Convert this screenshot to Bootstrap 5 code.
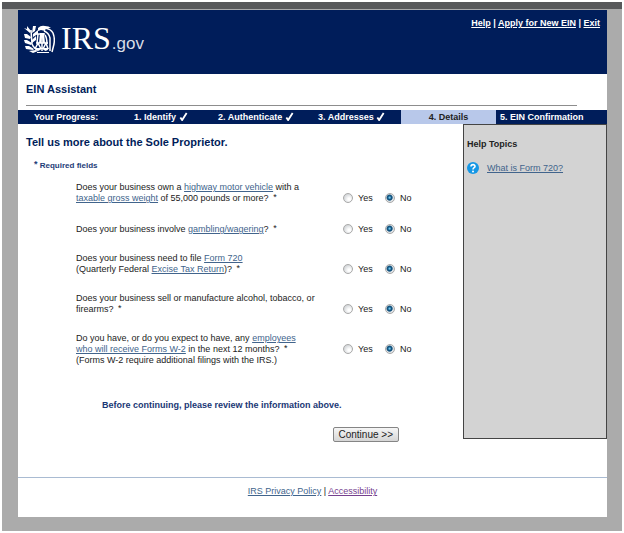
<!DOCTYPE html>
<html lang="en">
<head>
<meta charset="utf-8">
<meta name="viewport" content="width=device-width, initial-scale=1">
<title>EIN Assistant</title>
<link href="https://cdn.jsdelivr.net/npm/bootstrap@5.3.0/dist/css/bootstrap.min.css" rel="stylesheet">
<style>
  body { font-family: "Liberation Sans", Arial, sans-serif; font-size: 9px; line-height: 11px; color: #222; background: #fff; padding: 2px; }
  a { color: #41648c; }
  .frame { background: #ababab; border-top: 7px solid #58595b; padding: 1px 15px 14px 16px; min-height: calc(100vh - 4px); }
  .masthead { background: #001d5a; color: #fff; height: 64px; padding: 8px 7px 0 6px; }
  .masthead a { color: #fff; }
  .wordmark { margin: 2px 0 0 6px; }
  .irs { font-family: "Liberation Serif", "Times New Roman", serif; font-size: 32px; line-height: 36px; }
  .gov { font-size: 17px; color: #d9dde6; margin-left: 1px; }
  .app-title { font-size: 11px; line-height: 14px; color: #001d5a; padding: 8px 0 9px; margin: 0 30px 4px 8px; border-bottom: 1px solid #8d8d8d; }
  .steps { display: grid; grid-template-columns: 116fr 84fr 100fr 83fr 95fr 111fr; background: #001d5a; color: #fff; line-height: 14px; }
  .steps > div { height: 14px; }
  .steps svg { vertical-align: -1px; }
  .steps .current { background: #b8c8ea; color: #222; }
  .main-grid { display: grid; grid-template-columns: 445fr 144fr; }
  .form-title { font-size: 11px; line-height: 14px; color: #001d5a; margin: 3px 0 11px; }
  .required { font-size: 8px; color: #1d3c78; }
  .ast { font-size: 9px; line-height: 0; vertical-align: 1px; margin-left: 2px; }
  .questions { padding: 11px 0 0 50px; }
  .question { min-height: 13px; margin-bottom: 18px; }
  .q-text { flex: 0 0 69%; white-space: nowrap; }
  .choice { width: 42px; height: 11px; gap: 5px; }
  .choice input { appearance: none; width: 10px; height: 10px; margin: 0 0 2px; border: 1px solid #a9a9a9; border-radius: 50%; background: radial-gradient(circle at 65% 65%, #fff 15%, #d2d5d8 75%); }
  .choice input:checked { background: radial-gradient(circle at 45% 45%, #6cc5ee 0 8%, #12537f 28% 42%, #dfe3e6 56%); }
  .review { color: #1a3775; margin: 18px 0 16px; padding-left: 76px; }
  .go { font-size: 10px; line-height: 11px; padding: 1px 5px; color: #222; border: 1px solid #858585; border-radius: 2px; background: linear-gradient(#f6f6f6, #d5d5d5); }
  .help { background: #d3d3d3; border: 1px solid #444; padding: 14px 3px; min-height: 315px; }
  .help h2 { font-size: 9px; line-height: 11px; margin-bottom: 12px; }
  .site-footer { margin-top: 35px; padding: 8px 0 20px; border-top: 1px solid #a9bbd2; }
  .visited { color: #75418e; }
</style>
<script src="https://cdn.jsdelivr.net/npm/bootstrap@5.3.0/dist/js/bootstrap.bundle.min.js"></script>
</head>
<body>
<div class="frame">
  <div class="bg-white">
    <header class="masthead d-flex justify-content-between align-items-start">
      <div class="d-flex align-items-center">
        <svg class="mt-1" width="31" height="29" viewBox="0 0 31 29" fill="none" stroke="#fff" aria-label="IRS eagle" role="img">
          <g fill="#fff" stroke="none">
            <path d="M0 3l3 1 0-3 4 5-1 2zM0 9l3 0 4 3-1 2-5-1zM0 15l3 0 5 3-1 2-6-2zM1 21l4 0 5 3-1 1-7-1zM5 26l7-1 2 1-5 2z"/>
            <path d="M9 1l3 0-1 5-3 2zM14 5l0 4-5 3 0-3zM12 11l0 4-4 3 0-3z"/>
            <path d="M14 3q3-3 7-2q4 0 6 2l-5 0-1 3-4-1-3 1z"/>
            <path d="M16 8h4l1 10h-2l-1-6-1 6h-2z"/>
          </g>
          <g stroke-width="1.500">
            <path d="M7 5l1 14q1 3 4 5"/>
            <path d="M21 3q6 1 8 5q2 5 1 11l-2 8M20 6q5 2 6 7l0 13M21 10q2 3 2 9"/>
            <path d="M14 9l-1 9M13 9h8M18 12v14M12 18h12M11 24l3-6 3 6M19 24l3-6 2 6"/>
          </g>
          <path d="M10 23h8q-4 6-8 0zM18 23h7q-3 6-7 0zM13 27h12v1h-12z" fill="#fff" stroke="none"/>
        </svg>
        <div class="wordmark"><span class="irs">IRS</span><span class="gov">.gov</span></div>
      </div>
      <nav class="fw-bold text-nowrap" aria-label="Site">
        <a href="#">Help</a> | <a href="#">Apply for New EIN</a> | <a href="#">Exit</a>
      </nav>
    </header>

    <h1 class="app-title fw-bold">EIN Assistant</h1>

    <div class="steps fw-bold text-nowrap">
      <div class="ps-3">Your Progress:</div>
      <div>1. Identify <svg width="9" height="9" viewBox="0 0 9 10" fill="none" stroke="#fff" stroke-width="2" aria-hidden="true"><path d="M1 6l2 3L8 1"/></svg></div>
      <div>2. Authenticate <svg width="9" height="9" viewBox="0 0 9 10" fill="none" stroke="#fff" stroke-width="2" aria-hidden="true"><path d="M1 6l2 3L8 1"/></svg></div>
      <div>3. Addresses <svg width="9" height="9" viewBox="0 0 9 10" fill="none" stroke="#fff" stroke-width="2" aria-hidden="true"><path d="M1 6l2 3L8 1"/></svg></div>
      <div class="current text-center" aria-current="step">4. Details</div>
      <div class="ps-1">5. EIN Confirmation</div>
    </div>

    <div class="main-grid align-items-start">
      <form class="ps-2 pt-2">
        <h2 class="form-title fw-bold">Tell us more about the Sole Proprietor.</h2>
        <div class="required fw-bold ps-1 ms-1"><span class="ast m-0">*</span> Required fields</div>

        <div class="questions">
          <div class="question d-flex align-items-end" role="radiogroup" aria-labelledby="q1">
            <div class="q-text" id="q1">Does your business own a <a href="#">highway motor vehicle</a> with a<br><a href="#">taxable gross weight</a> of 55,000 pounds or more?<span class="ast"> *</span></div>
            <label class="choice d-flex align-items-center"><input type="radio" name="vehicle">Yes</label>
            <label class="choice d-flex align-items-center"><input type="radio" name="vehicle" checked>No</label>
          </div>
          <div class="question d-flex align-items-end" role="radiogroup" aria-labelledby="q2">
            <div class="q-text" id="q2">Does your business involve <a href="#">gambling/wagering</a>?<span class="ast"> *</span></div>
            <label class="choice d-flex align-items-center"><input type="radio" name="gambling">Yes</label>
            <label class="choice d-flex align-items-center"><input type="radio" name="gambling" checked>No</label>
          </div>
          <div class="question d-flex align-items-end" role="radiogroup" aria-labelledby="q3">
            <div class="q-text" id="q3">Does your business need to file <a href="#">Form 720</a><br>(Quarterly Federal <a href="#">Excise Tax Return</a>)?<span class="ast"> *</span></div>
            <label class="choice d-flex align-items-center"><input type="radio" name="excise">Yes</label>
            <label class="choice d-flex align-items-center"><input type="radio" name="excise" checked>No</label>
          </div>
          <div class="question d-flex align-items-end" role="radiogroup" aria-labelledby="q4">
            <div class="q-text" id="q4">Does your business sell or manufacture alcohol, tobacco, or<br>firearms?<span class="ast"> *</span></div>
            <label class="choice d-flex align-items-center"><input type="radio" name="alcohol">Yes</label>
            <label class="choice d-flex align-items-center"><input type="radio" name="alcohol" checked>No</label>
          </div>
          <div class="question d-flex align-items-end mb-0" role="radiogroup" aria-labelledby="q5">
            <div class="q-text" id="q5">Do you have, or do you expect to have, any <a href="#">employees<br>who will receive Forms W-2</a> in the next 12 months?<span class="ast"> *</span></div>
            <label class="choice d-flex align-items-center"><input type="radio" name="employees">Yes</label>
            <label class="choice d-flex align-items-center"><input type="radio" name="employees" checked>No</label>
          </div>
          <div>(Forms W-2 require additional filings with the IRS.)</div>
        </div>

        <p class="review fw-bold pt-3">Before continuing, please review the information above.</p>
        <div class="text-end pe-5 me-3"><button type="submit" class="go">Continue &gt;&gt;</button></div>
      </form>

      <aside class="help">
        <h2 class="fw-bold">Help Topics</h2>
        <div class="d-flex align-items-center gap-2">
          <svg width="12" height="12" viewBox="0 0 12 12" aria-hidden="true"><circle cx="6" cy="6" r="6" fill="#1597e5"/><path d="M4 4.500C4 2 8.200 2 8 4.500C7.900 5.800 6 5.700 6 7.500" fill="none" stroke="#fff" stroke-width="1.600"/><circle cx="6" cy="9.400" r="1" fill="#fff"/></svg>
          <a href="#">What is Form 720?</a>
        </div>
      </aside>
    </div>

    <footer class="site-footer text-center"><a href="#">IRS Privacy Policy</a> | <a class="visited" href="#">Accessibility</a></footer>
  </div>
</div>
</body>
</html>
